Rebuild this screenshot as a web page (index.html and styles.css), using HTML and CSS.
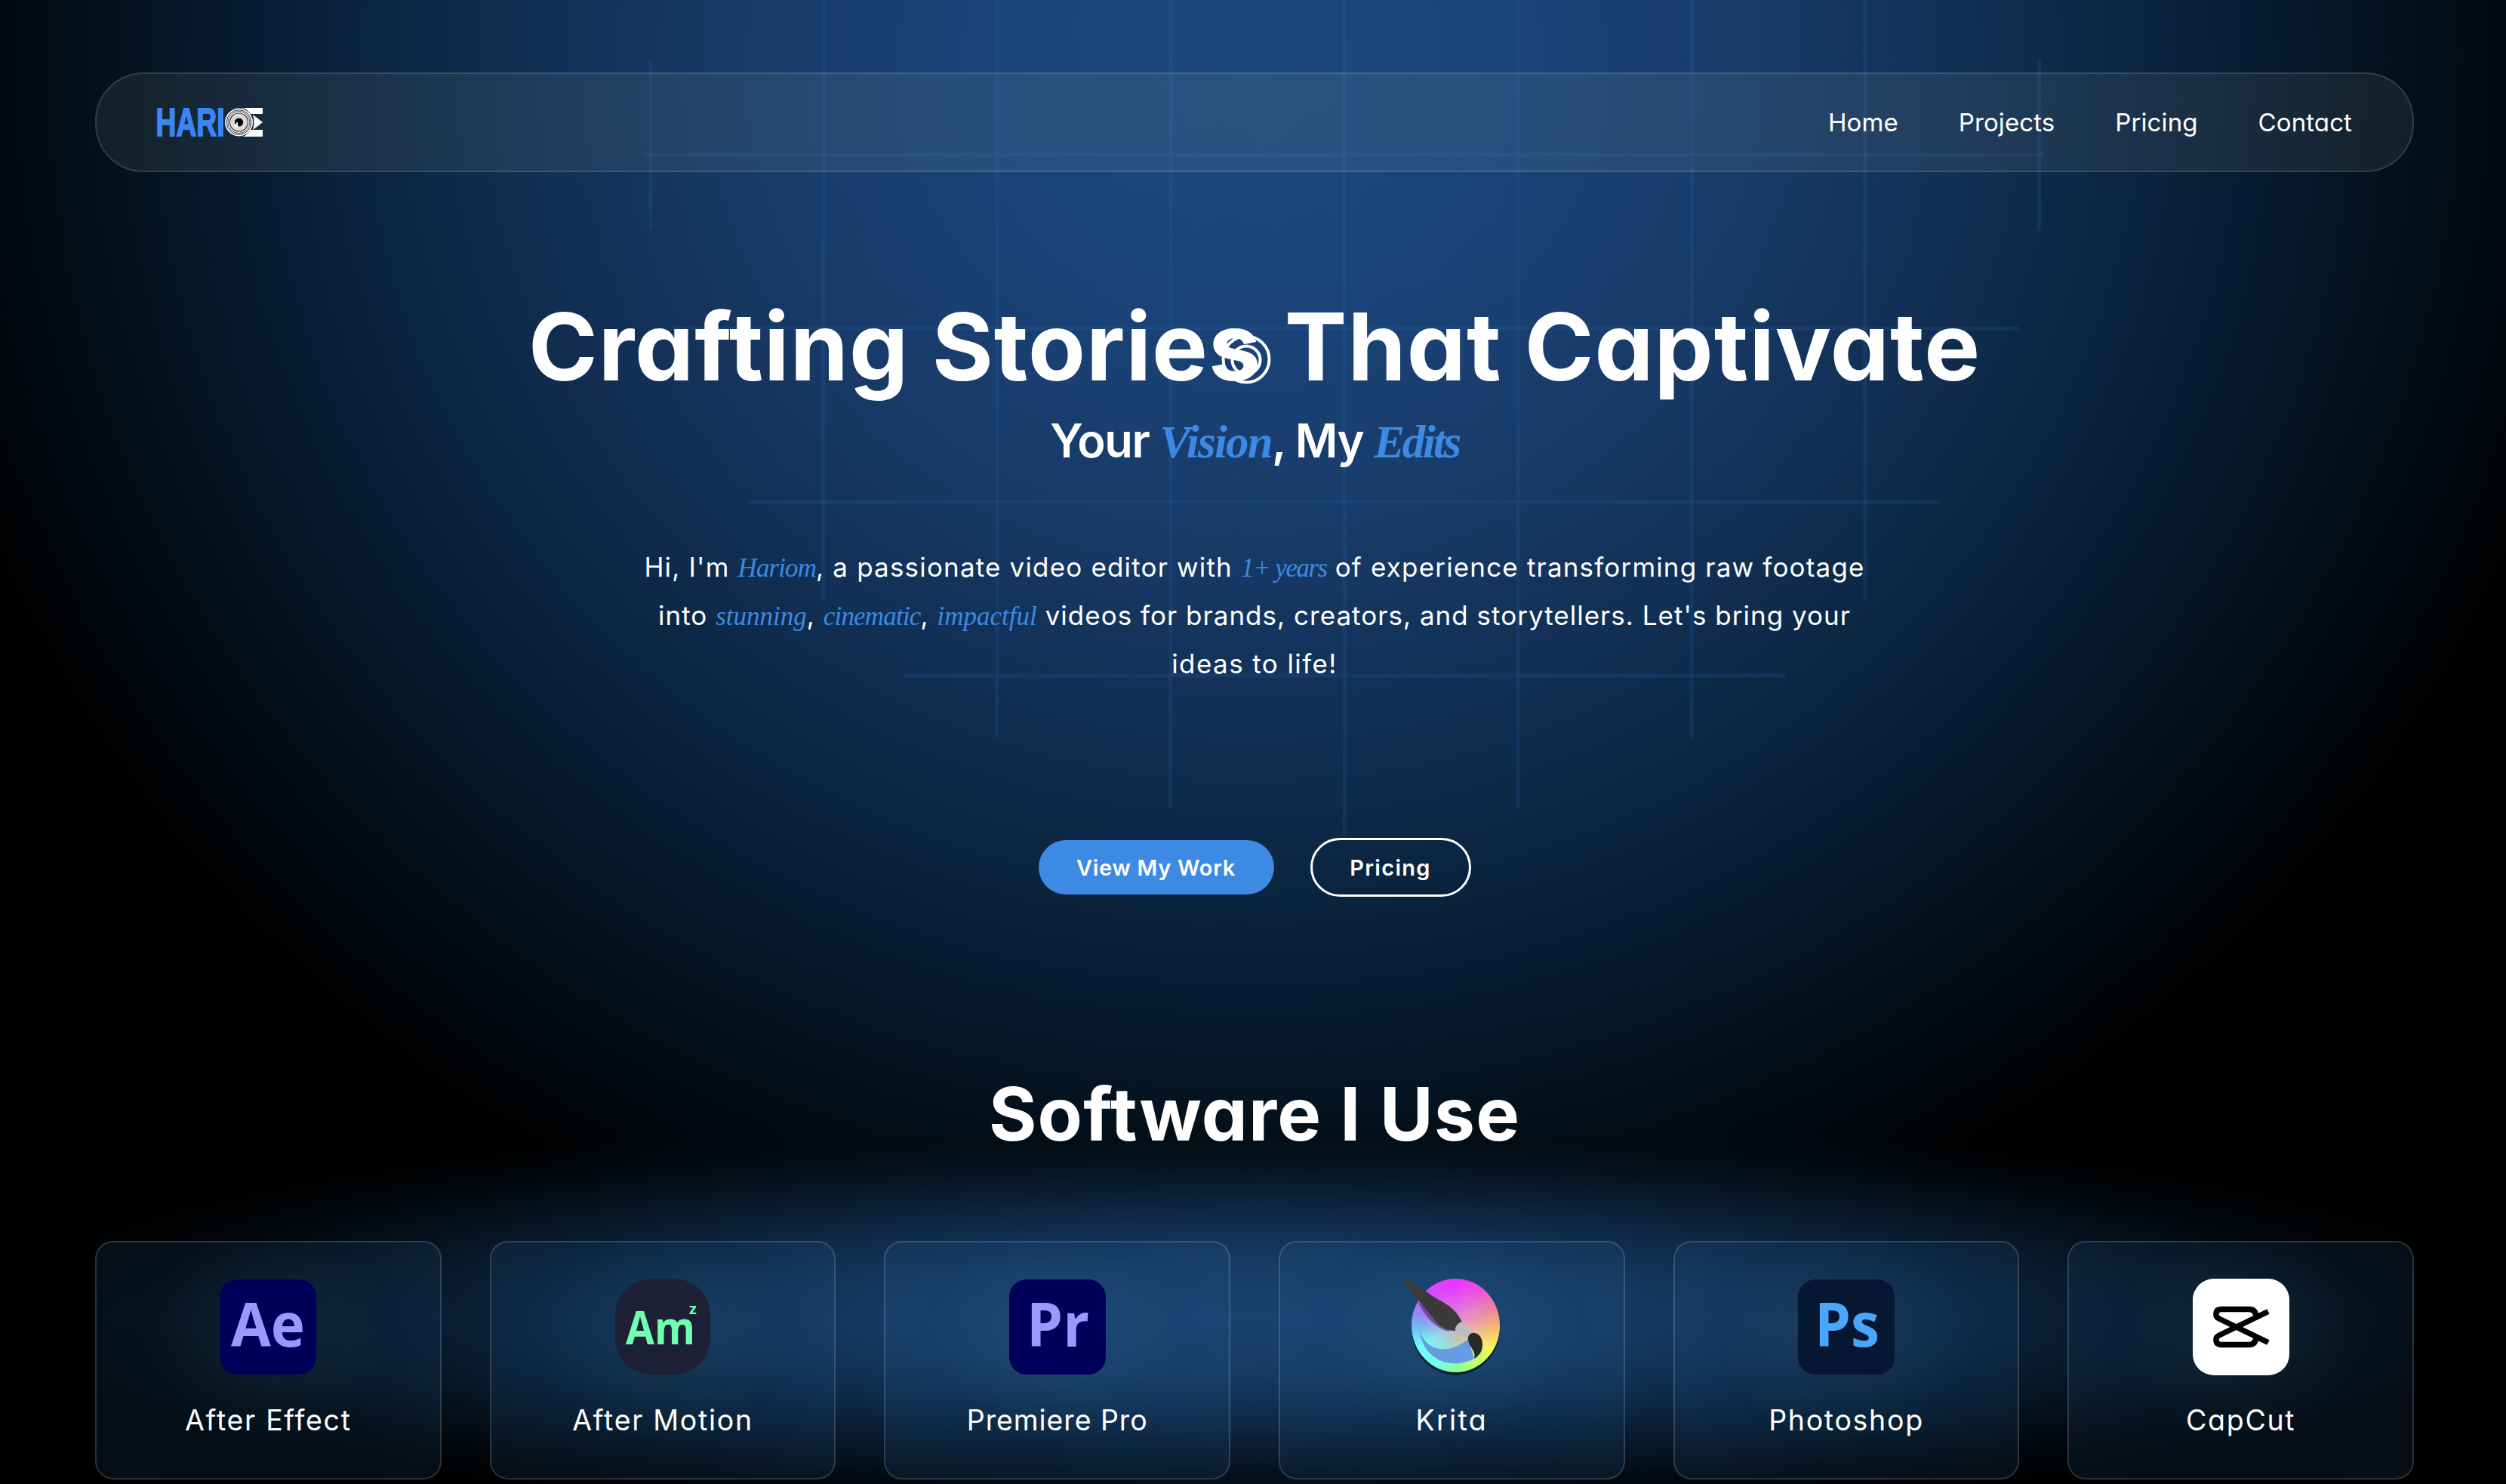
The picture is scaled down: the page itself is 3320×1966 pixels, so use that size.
FILE: index.html
```html
<!DOCTYPE html>
<html lang="en">
<head>
<meta charset="utf-8">
<title>Hariom — Video Editor</title>
<link rel="stylesheet" href="styles.css">
</head>
<body>
<div class="page">
  <svg class="grid-lines" viewBox="0 0 3320 1200" aria-hidden="true">
    <path d="M862 80V305M1091 0V795M1321 0V978M1551 0V1070M1781 0V1108M2011 0V1070M2241 0V978M2471 0V795M2702 80V305"/>
    <path d="M853 205H2708M888 435H2675M992 665H2570M1198 895H2365"/>
  </svg>

  <header class="nav">
    <svg class="logo" viewBox="0 0 140 38" role="img" aria-label="Hariom">
      <text x="-1.500" y="37" textLength="91" lengthAdjust="spacingAndGlyphs">HARI</text>
      <path d="M112 0H140V8H124Q118 0 112 0ZM112 38H140V29H124Q118 38 112 38ZM127 9L140 19L127 29Q130 19 127 9Z" fill="#fff"/>
      <circle cx="108.500" cy="19" r="18.500" fill="#fff"/>
      <g fill="none" stroke="#222"><circle cx="108.500" cy="19" r="16.300" stroke-width="1"/><circle cx="108.500" cy="19" r="14.500" stroke-width=".8"/><circle cx="108.500" cy="19" r="12" stroke-width="1.200"/></g>
      <circle cx="108.500" cy="19" r="11" fill="#d9d9d9"/>
      <circle cx="108.500" cy="19" r="5.600" fill="#000"/>
      <circle cx="106" cy="20" r="1.200" fill="#fff"/><circle cx="105" cy="23.500" r="2.500" fill="#fff"/>
    </svg>
    <nav class="menu">
      <a>Home</a><a>Projects</a><a>Pricing</a><a>Contact</a>
    </nav>
  </header>

  <main>
    <section class="hero">
      <h1>Crafting Stories That Captivate</h1>
      <h2 class="tagline">Your <em class="vision">Vision</em>, My <em class="edits">Edits</em></h2>
      <p class="intro">
        <span class="line-1">Hi, I'm <em class="name">Hariom</em>, a passionate video editor with <em class="years">1+ years</em> of experience transforming raw footage</span>
        <span class="line-2">into <em>stunning</em>, <em class="cinematic">cinematic</em>, <em>impactful</em> videos for brands, creators, and storytellers. Let's bring your</span>
        <span class="line-3">ideas to life!</span>
      </p>
      <div class="actions">
        <a class="btn btn-solid">View My Work</a>
        <a class="btn btn-outline">Pricing</a>
      </div>
    </section>

    <section class="software">
      <h2 class="section-title">Software I Use</h2>
      <div class="cards">
        <article class="card">
          <svg class="icon" viewBox="0 0 128 128"><rect y="1" width="128" height="126" rx="23" fill="#00005b"/><text x="15" y="90" font-size="80" textLength="98" lengthAdjust="spacingAndGlyphs" fill="#99f">Ae</text></svg>
          <h3>After Effect</h3>
        </article>
        <article class="card">
          <svg class="icon" viewBox="0 0 128 128"><rect x="1" width="126" height="127" rx="48" fill="#1e2036"/><text x="15" y="87" font-size="60" textLength="92" lengthAdjust="spacingAndGlyphs" fill="#70ffaf">Am</text><text x="99" y="47" font-size="20" fill="#70ffaf">z</text></svg>
          <h3>After Motion</h3>
        </article>
        <article class="card">
          <svg class="icon" viewBox="0 0 128 128"><rect y="1" width="128" height="126" rx="23" fill="#00005b"/><text x="23" y="90" font-size="80" textLength="83" lengthAdjust="spacingAndGlyphs" fill="#99f">Pr</text></svg>
          <h3 class="tight">Premiere Pro</h3>
        </article>
        <article class="card">
          <div class="icon krita">
            <svg viewBox="0 0 128 128">
              <path d="M21 67C31 100 64 99 86 80L94 106C62 122 26 107 21 67Z" fill="#659ce4"/>
              <path d="M19 30C28 48 42 67 62 70L56 60Z" fill="#5c2f7a" opacity=".7"/>
              <path d="M1 4Q-1 0 4 0Q6 0 8 2L32 18C48 31 68 34 78 58L69 69C56 69 46 62 38 50C26 35 10 18 1 4Z" fill="#3a3a3a"/>
              <path d="M77 57L92 73L85 80L69 68Q68 62 77 57Z" fill="#bdbdbd"/>
              <path d="M86 81C85 67 105 69 105 87C105 96 101 102 94 106C97 95 87 91 86 81Z" fill="#292929"/>
            </svg>
          </div>
          <h3 class="wide">Krita</h3>
        </article>
        <article class="card">
          <svg class="icon" viewBox="0 0 128 128"><rect y="1" width="128" height="126" rx="23" fill="#051733"/><text x="22" y="90" font-size="80" textLength="86" lengthAdjust="spacingAndGlyphs" fill="#4aa6fb">Ps</text></svg>
          <h3>Photoshop</h3>
        </article>
        <article class="card">
          <svg class="icon" viewBox="0 0 128 128"><rect width="128" height="128" rx="28" fill="#fff"/><g fill="none" stroke="#000" stroke-width="7.500"><path d="M100 43.500L35 75Q31 77 31 80V81Q31 87.500 38 87.500H75Q83 87.500 84 78"/><path d="M100 84.500L35 53Q31 51 31 48V47Q31 40.500 38 40.500H75Q83 40.500 84 50"/></g></svg>
          <h3>CapCut</h3>
        </article>
      </div>
    </section>
  </main>

  <svg class="cursor" viewBox="0 0 66 66" aria-hidden="true"><circle cx="33" cy="33" r="30.500"/><circle cx="33" cy="34" r="18.500"/></svg>
</div>
</body>
</html>
```
FILE: styles.css
```css
* { box-sizing: border-box; }
body { margin: 0; background: #000; color: #fff; font-family: Inter, "Liberation Sans", sans-serif; font-feature-settings: "cv11"; }
h1, h2, h3, p { margin: 0; }

.page {
  position: relative;
  width: 3320px;
  height: 1966px;
  padding: 96px 122px 0 126px;
  overflow: hidden;
  background: radial-gradient(ellipse 1820px 1700px at 1660px 80px,
    #1c487d 0%, #1b447a 18%, #183b69 36%, #122f54 52%, #0c2642 63%, #071c32 73%, #03121e 83%, #01080e 92%, #000 100%);
}
.grid-lines { position: absolute; left: 0; top: 0; width: 3320px; height: 1200px; fill: none; stroke: #2b6cb8; stroke-opacity: .17; stroke-width: 5; }

.nav {
  position: relative;
  display: flex;
  align-items: center;
  justify-content: space-between;
  height: 132px;
  padding: 0 80px;
  border: 2px solid rgba(255, 255, 255, .13);
  border-radius: 64px;
  background: rgba(190, 200, 175, .09);
}
.logo { width: 140px; height: 38px; overflow: visible; }
.logo text { font: 700 51px "Liberation Sans Narrow", "Liberation Sans", sans-serif; fill: #3b86f7; stroke: #3b86f7; stroke-width: 1.800px; }
.menu { display: flex; gap: 80px; font-size: 33px; line-height: 40px; letter-spacing: .1px; }

.hero { position: relative; display: flex; flex-direction: column; align-items: center; padding-top: 161px; white-space: nowrap; }
h1 { font-size: 124px; line-height: 140px; font-weight: 700; letter-spacing: 1px; }
.tagline { margin-top: 15px; font-size: 61.500px; line-height: 80px; font-weight: 600; letter-spacing: -1.500px; }
em { color: #3c8ae3; font-family: "Liberation Serif", serif; font-style: italic; line-height: 0; letter-spacing: 0; }
.tagline em { font-size: 61px; font-weight: 700; }
.vision { letter-spacing: -1.800px; }
.edits { letter-spacing: -3.200px; }
.intro { display: flex; flex-direction: column; align-items: center; margin-top: 95px; font-size: 35px; line-height: 64px; font-feature-settings: normal; }
.intro em { font-size: 35px; }
.intro .name { letter-spacing: -.900px; }
.intro .years { letter-spacing: -1.500px; }
.intro .cinematic { letter-spacing: -.800px; }
.line-1 { letter-spacing: 1.170px; }
.line-2 { letter-spacing: 1.020px; }
.line-3 { letter-spacing: 1.400px; }
.actions { display: flex; align-items: center; gap: 48px; margin-top: 199px; height: 78px; }
.btn { display: flex; align-items: center; justify-content: center; font-size: 29px; font-weight: 600; letter-spacing: .700px; border-radius: 39px; }
.btn-solid { width: 312px; height: 72px; background: #3c8ae3; }
.btn-outline { width: 213px; height: 78px; border: 3px solid #fff; letter-spacing: 1.300px; }

.software { position: relative; margin-top: 192px; padding-top: 36px; height: 600px;
  background: radial-gradient(ellipse 1700px 275px at 50% 365px, #1a416f 0%, #163a64 28%, #102c4c 46%, #0a1f35 60%, #05131f 74%, rgba(3, 12, 20, .6) 86%, transparent 100%); }
.section-title { text-align: center; font-size: 97px; line-height: 120px; font-weight: 700; letter-spacing: 1.100px; }
.cards { display: grid; grid-template-columns: repeat(6, 1fr); gap: 64px; margin-top: 108px; }
.card {
  display: flex;
  flex-direction: column;
  align-items: center;
  height: 316px;
  padding-top: 48px;
  border: 2px solid rgba(255, 255, 255, .15);
  border-radius: 24px;
  background: radial-gradient(ellipse 260px 220px at 50% 40%, rgba(60, 125, 160, .2), rgba(30, 90, 150, .14) 65%, rgba(50, 110, 160, .12));
}
.icon { display: block; width: 128px; height: 128px; }
.icon text { font-family: "Open Sans", "Noto Sans", sans-serif; font-weight: 700; }
.card h3 { margin-top: 35px; font-size: 37.500px; line-height: 50px; font-weight: 400; letter-spacing: 1.700px; }
.card h3.tight { letter-spacing: .900px; }
.card h3.wide { letter-spacing: 2.400px; }
.krita { position: relative; }
.krita::before {
  content: "";
  position: absolute;
  left: 11px;
  top: 0;
  width: 117px;
  height: 124px;
  border-radius: 50%;
  box-shadow: 0 4px 0 #0b2334;
  background:
    radial-gradient(circle at 55% 50%, rgba(222, 160, 205, .9), rgba(222, 160, 205, 0) 60%),
    conic-gradient(#ea33ff 0deg, #ee50e0 35deg, #f08a90 70deg, #f8c060 95deg, #ffff50 122deg, #c8ff60 145deg, #90ffa0 180deg, #75ffe8 205deg, #70fff8 240deg, #70c0f0 265deg, #9a80f8 290deg, #d050ff 320deg, #ea33ff 360deg);
}
.krita svg { position: relative; display: block; overflow: visible; }
.cursor { position: absolute; left: 1618px; top: 443px; width: 66px; height: 66px; fill: none; stroke: #fff; stroke-width: 4; }
```
